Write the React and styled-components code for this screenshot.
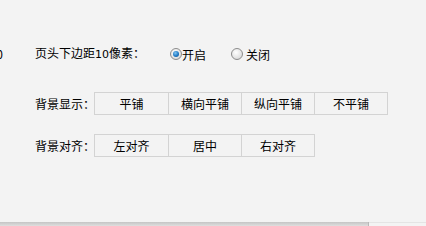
import React, {useState} from "react";
import styled, {createGlobalStyle} from 'styled-components';

const GlobalStyle = createGlobalStyle`
  html, body {
    margin: 0;
    padding: 0;
    background: #f3f3f3;
  }
  body {
    font-family: "Noto Sans CJK SC", "DejaVu Sans", sans-serif;
    font-size: 12px;
    color: #000;
  }
`

const Page = styled.div`
  display: flex;
  flex-direction: column;
  height: 226px;
  overflow: hidden;
`

const Content = styled.div`
  display: flex;
  flex-direction: column;
  padding-top: 45px;
`

const Row = styled.div`
  display: flex;
  align-items: center;
  height: ${p => p.$h || 23}px;
  margin-bottom: ${p => p.$mb || 0}px;
`

const Stub = styled.span`
  display: inline-block;
  width: 3px;
  overflow: hidden;
  direction: rtl;
  line-height: 18px;
`

const Label = styled.span`
  width: ${p => p.$w}px;
  margin-left: ${p => p.$ml || 0}px;
  line-height: 18px;
  white-space: nowrap;
`

const Num = styled.span`
  font-family: "DejaVu Sans", sans-serif;
  font-size: 11px;
`

const RadioWrap = styled.label`
  display: flex;
  align-items: center;
  width: ${p => p.$w}px;
  cursor: pointer;
`

const RadioDot = styled.span`
  box-sizing: border-box;
  width: 12px;
  height: 12px;
  border-radius: 50%;
  border: 1px solid #8c8c8c;
  background: radial-gradient(circle at 40% 35%, #ffffff 0%, #e6e6e6 55%, #cfcfcf 100%);
  display: flex;
  align-items: center;
  justify-content: center;
  margin-right: ${p => p.$gap}px;

  &::after {
    content: "";
    display: ${p => (p.$on ? "block" : "none")};
    width: 6px;
    height: 6px;
    border-radius: 50%;
    background: radial-gradient(circle at 40% 35%, #7fc4f2 0%, #1f79c4 55%, #0d4e8e 100%);
  }
`

const Cells = styled.div`
  display: flex;
  border: 1px solid #d3d3d3;
  height: 23px;
  box-sizing: border-box;
`

const Cell = styled.button`
  width: 73px;
  height: 21px;
  box-sizing: border-box;
  border: none;
  border-left: ${p => (p.$first ? "none" : "1px solid #d3d3d3")};
  background: #f3f3f3;
  font-family: inherit;
  font-size: 12px;
  color: #000;
  padding: 0;
  line-height: 21px;
  cursor: pointer;
`

const Footer = styled.div`
  margin-top: auto;
  display: flex;
  height: 4px;
`

const Track = styled.div`
  width: 368px;
  background: linear-gradient(#c4c4c4, #dedede);
  border-right: 1px solid #b8b8b8;
`

const Corner = styled.div`
  flex: 1;
  border-top: 1px solid #e4e4e4;
`

const Radio = ({on, gap, w, children, onPick}) => (
    <RadioWrap $w={w} onClick={onPick}>
        <RadioDot $on={on} $gap={gap}/>
        {children}
    </RadioWrap>
)

export default function App() {
    const [margin, setMargin] = useState(true)

    return (
        <Page>
            <GlobalStyle/>
            <Content>
                <Row $h={18} $mb={29}>
                    <Stub>0</Stub>
                    <Label $w={135} $ml={32}>页头下边距<Num>10</Num>像素：</Label>
                    <Radio on={margin} gap={0} w={61} onPick={() => setMargin(true)}>开启</Radio>
                    <Radio on={!margin} gap={3} w={60} onPick={() => setMargin(false)}>关闭</Radio>
                </Row>
                <Row $mb={19}>
                    <Label $w={59} $ml={35}>背景显示：</Label>
                    <Cells>
                        <Cell $first>平铺</Cell>
                        <Cell>横向平铺</Cell>
                        <Cell>纵向平铺</Cell>
                        <Cell>不平铺</Cell>
                    </Cells>
                </Row>
                <Row>
                    <Label $w={59} $ml={35}>背景对齐：</Label>
                    <Cells>
                        <Cell $first>左对齐</Cell>
                        <Cell>居中</Cell>
                        <Cell>右对齐</Cell>
                    </Cells>
                </Row>
            </Content>
            <Footer>
                <Track/>
                <Corner/>
            </Footer>
        </Page>
    )
}
